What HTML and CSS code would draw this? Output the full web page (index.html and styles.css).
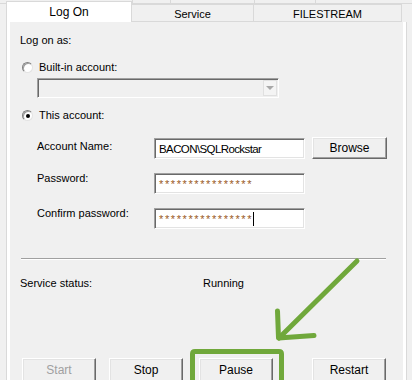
FILE: index.html
```html
<!DOCTYPE html>
<html lang="en">
<head>
    <meta charset="UTF-8">
    <meta name="viewport" content="width=device-width, initial-scale=1.0">
    <title>Service Properties - Log On</title>
    <link rel="stylesheet" href="styles.css">
</head>
<body>
    <div class="dialog">
        <div class="back-row">
            <span class="back-tab back-tab-1"></span>
            <span class="back-tab back-tab-2"></span>
            <span class="back-tab back-tab-3"></span>
            <span class="back-tab back-tab-4"></span>
        </div>

        <div class="tab-row">
            <div class="tab tab-active">Log On</div>
            <div class="tab tab-service">Service</div>
            <div class="tab tab-filestream">FILESTREAM</div>
        </div>

        <div class="page">
            <div class="panel">
                <div class="text-line">Log on as:</div>

                <div class="radio-row radio-builtin">
                    <span class="radio"></span>
                    <span>Built-in account:</span>
                </div>
                <div class="combo">
                    <span class="combo-btn"><span class="combo-arrow"></span></span>
                </div>

                <div class="radio-row radio-this">
                    <span class="radio radio-checked"></span>
                    <span>This account:</span>
                </div>

                <div class="fields">
                    <div class="field-label field-label-first">Account Name:</div>
                    <div class="textbox textbox-name">BACON\SQLRockstar</div>
                    <div class="button browse-btn">Browse</div>

                    <div class="field-label">Password:</div>
                    <div class="textbox textbox-password">****************</div>
                    <div></div>

                    <div class="field-label">Confirm password:</div>
                    <div class="textbox textbox-password"><span>****************</span><span class="caret"></span></div>
                    <div></div>
                </div>

                <div class="separator"></div>

                <div class="status-row">
                    <span class="status-label">Service status:</span>
                    <span class="status-value">Running</span>
                </div>

                <div class="action-row">
                    <div class="button action-btn btn-start disabled">Start</div>
                    <div class="button action-btn btn-stop">Stop</div>
                    <div class="button action-btn btn-pause">Pause</div>
                    <div class="button action-btn btn-restart">Restart</div>
                </div>
            </div>
        </div>

        <!-- hand-drawn callout pointing at Pause -->
        <svg class="callout" width="412" height="380" viewBox="0 0 412 380">
            <path d="M192.5 382 L192.5 354 Q192.5 351.5 195 351.5 L279 351.5 Q281.5 351.5 281.5 354 L281.5 382"
                  fill="none" stroke="#70a83b" stroke-width="5" stroke-linejoin="round"/>
            <path d="M357 261 L279 338" fill="none" stroke="#70a83b" stroke-width="5" stroke-linecap="round"/>
            <path d="M277.5 311 L278.5 338 L314 335.5" fill="none" stroke="#70a83b" stroke-width="5"
                  stroke-linecap="round" stroke-linejoin="round"/>
        </svg>
    </div>
</body>
</html>
```

FILE: styles.css
```css
:root {
    --dialog-bg: #f0f0f0;
    --tab-border: #d9d9d9;
    --text-color: #000000;
    --shadow-dark: #696969;
    --shadow-mid: #a0a0a0;
    --shadow-light: #e3e3e3;
}

body, html {
    margin: 0;
    padding: 0;
    background-color: var(--dialog-bg);
    color: var(--text-color);
    font-family: 'Liberation Sans', Arial, sans-serif;
    font-size: 11px;
    height: 380px;
    overflow: hidden;
}

.dialog {
    position: relative;
    width: 412px;
    height: 380px;
}

/* upper row of tabs, mostly hidden behind the current row */
.back-row {
    display: flex;
    height: 3px;
    border-bottom: 1px solid var(--tab-border);
    margin-bottom: -3px;
}

.back-tab {
    height: 3px;
    border-right: 1px solid var(--tab-border);
}

.back-tab-1 { width: 132px; }
.back-tab-2 { width: 37px; }
.back-tab-3 { width: 83px; }
.back-tab-4 { width: 60px; }

.tab-row {
    position: relative;
    display: flex;
    align-items: flex-end;
    height: 21px;
    padding-left: 6px;
}

.tab {
    display: flex;
    align-items: center;
    justify-content: center;
    box-sizing: border-box;
    height: 18px;
    padding-top: 1px;
    background-color: var(--dialog-bg);
    border-top: 1px solid var(--tab-border);
    border-right: 1px solid var(--tab-border);
    border-bottom: 1px solid var(--tab-border);
}

.tab-active {
    height: 21px;
    width: 126px;
    padding-top: 0;
    padding-bottom: 1px;
    font-size: 12px;
    background-color: #ffffff;
    border-left: 1px solid var(--tab-border);
    border-bottom: none;
}

.tab-service {
    width: 122px;
}

.tab-filestream {
    width: 148px;
}

.page {
    margin-left: 6px;
    padding: 0 3px;
    box-sizing: border-box;
    width: 401px;
    height: 358px;
    background-color: #ffffff;
    border-left: 1px solid var(--tab-border);
    border-right: 1px solid var(--tab-border);
}

.panel {
    height: 100%;
    padding: 11px 0 0 10px;
    box-sizing: border-box;
    background-color: var(--dialog-bg);
}

.text-line {
    line-height: 14px;
}

.radio-row {
    display: flex;
    align-items: center;
    gap: 6px;
    line-height: 14px;
    padding-left: 2px;
}

.radio-builtin {
    margin-top: 13px;
}

.radio-this {
    margin-top: 10px;
}

.radio {
    position: relative;
    width: 9px;
    height: 9px;
    border-radius: 50%;
    background-color: #ffffff;
    border: 1px solid;
    border-color: #808080 #e3e3e3 #e3e3e3 #808080;
    box-shadow: inset 1px 1px 0 #a0a0a0;
}

.radio-checked::after {
    content: '';
    position: absolute;
    left: 3px;
    top: 3px;
    width: 4px;
    height: 4px;
    border-radius: 50%;
    background-color: #000000;
}

.combo {
    display: flex;
    justify-content: flex-end;
    align-items: stretch;
    box-sizing: border-box;
    width: 242px;
    height: 20px;
    margin: 4px 0 0 17px;
    padding: 1px;
    background-color: var(--dialog-bg);
    border: 1px solid;
    border-color: var(--shadow-mid) #ffffff #ffffff var(--shadow-mid);
    box-shadow: inset 1px 1px 0 var(--shadow-dark);
}

.combo-btn {
    display: flex;
    align-items: center;
    justify-content: center;
    width: 12px;
    background-color: #f4f4f4;
    border: 1px solid #e0e0e0;
}

.combo-arrow {
    width: 0;
    height: 0;
    border-left: 4px solid transparent;
    border-right: 4px solid transparent;
    border-top: 4px solid #a8a8a8;
}

.fields {
    display: grid;
    grid-template-columns: 110px 151px 75px;
    column-gap: 7px;
    row-gap: 14px;
    margin: 16px 0 0 17px;
}

.field-label {
    line-height: 14px;
    margin-top: -2px;
}

.field-label-first {
    margin-top: 1px;
}

.textbox {
    box-sizing: border-box;
    height: 21px;
    padding: 3px 0 0 4px;
    line-height: 14px;
    background-color: #ffffff;
    border: 1px solid;
    border-color: var(--shadow-mid) #ffffff #ffffff var(--shadow-mid);
    box-shadow: inset 1px 1px 0 var(--shadow-dark), inset -1px -1px 0 var(--shadow-light);
    white-space: nowrap;
}

.textbox-name {
    font-size: 11.5px;
    letter-spacing: -0.6px;
}

.textbox-password {
    display: flex;
    align-items: center;
    padding-top: 0;
    color: #9a5a26;
    letter-spacing: 1.6px;
}

.caret {
    width: 1px;
    height: 14px;
    background-color: #000000;
}

.button {
    display: flex;
    align-items: center;
    justify-content: center;
    box-sizing: border-box;
    background-color: var(--dialog-bg);
    border: 1px solid;
    border-color: #ffffff var(--shadow-dark) var(--shadow-dark) #ffffff;
    box-shadow: inset -1px -1px 0 var(--shadow-mid), inset 1px 1px 0 var(--shadow-light);
    font-size: 12px;
}

.browse-btn {
    height: 22px;
    margin-top: -1px;
}

.separator {
    width: 365px;
    margin: 29px 0 0 1px;
    border-top: 1px solid var(--shadow-mid);
    border-bottom: 1px solid #ffffff;
}

.status-row {
    display: flex;
    line-height: 14px;
    margin-top: 16px;
}

.status-label {
    width: 183px;
}

.action-row {
    display: flex;
    margin: 68px 0 0 2px;
}

.action-btn {
    width: 74px;
    height: 24px;
}

.btn-stop { margin-left: 13px; }
.btn-pause { margin-left: 16px; }
.btn-restart { margin-left: 39px; }

.disabled {
    color: #a0a0a0;
}

.callout {
    position: absolute;
    left: 0;
    top: 0;
    pointer-events: none;
}
```
